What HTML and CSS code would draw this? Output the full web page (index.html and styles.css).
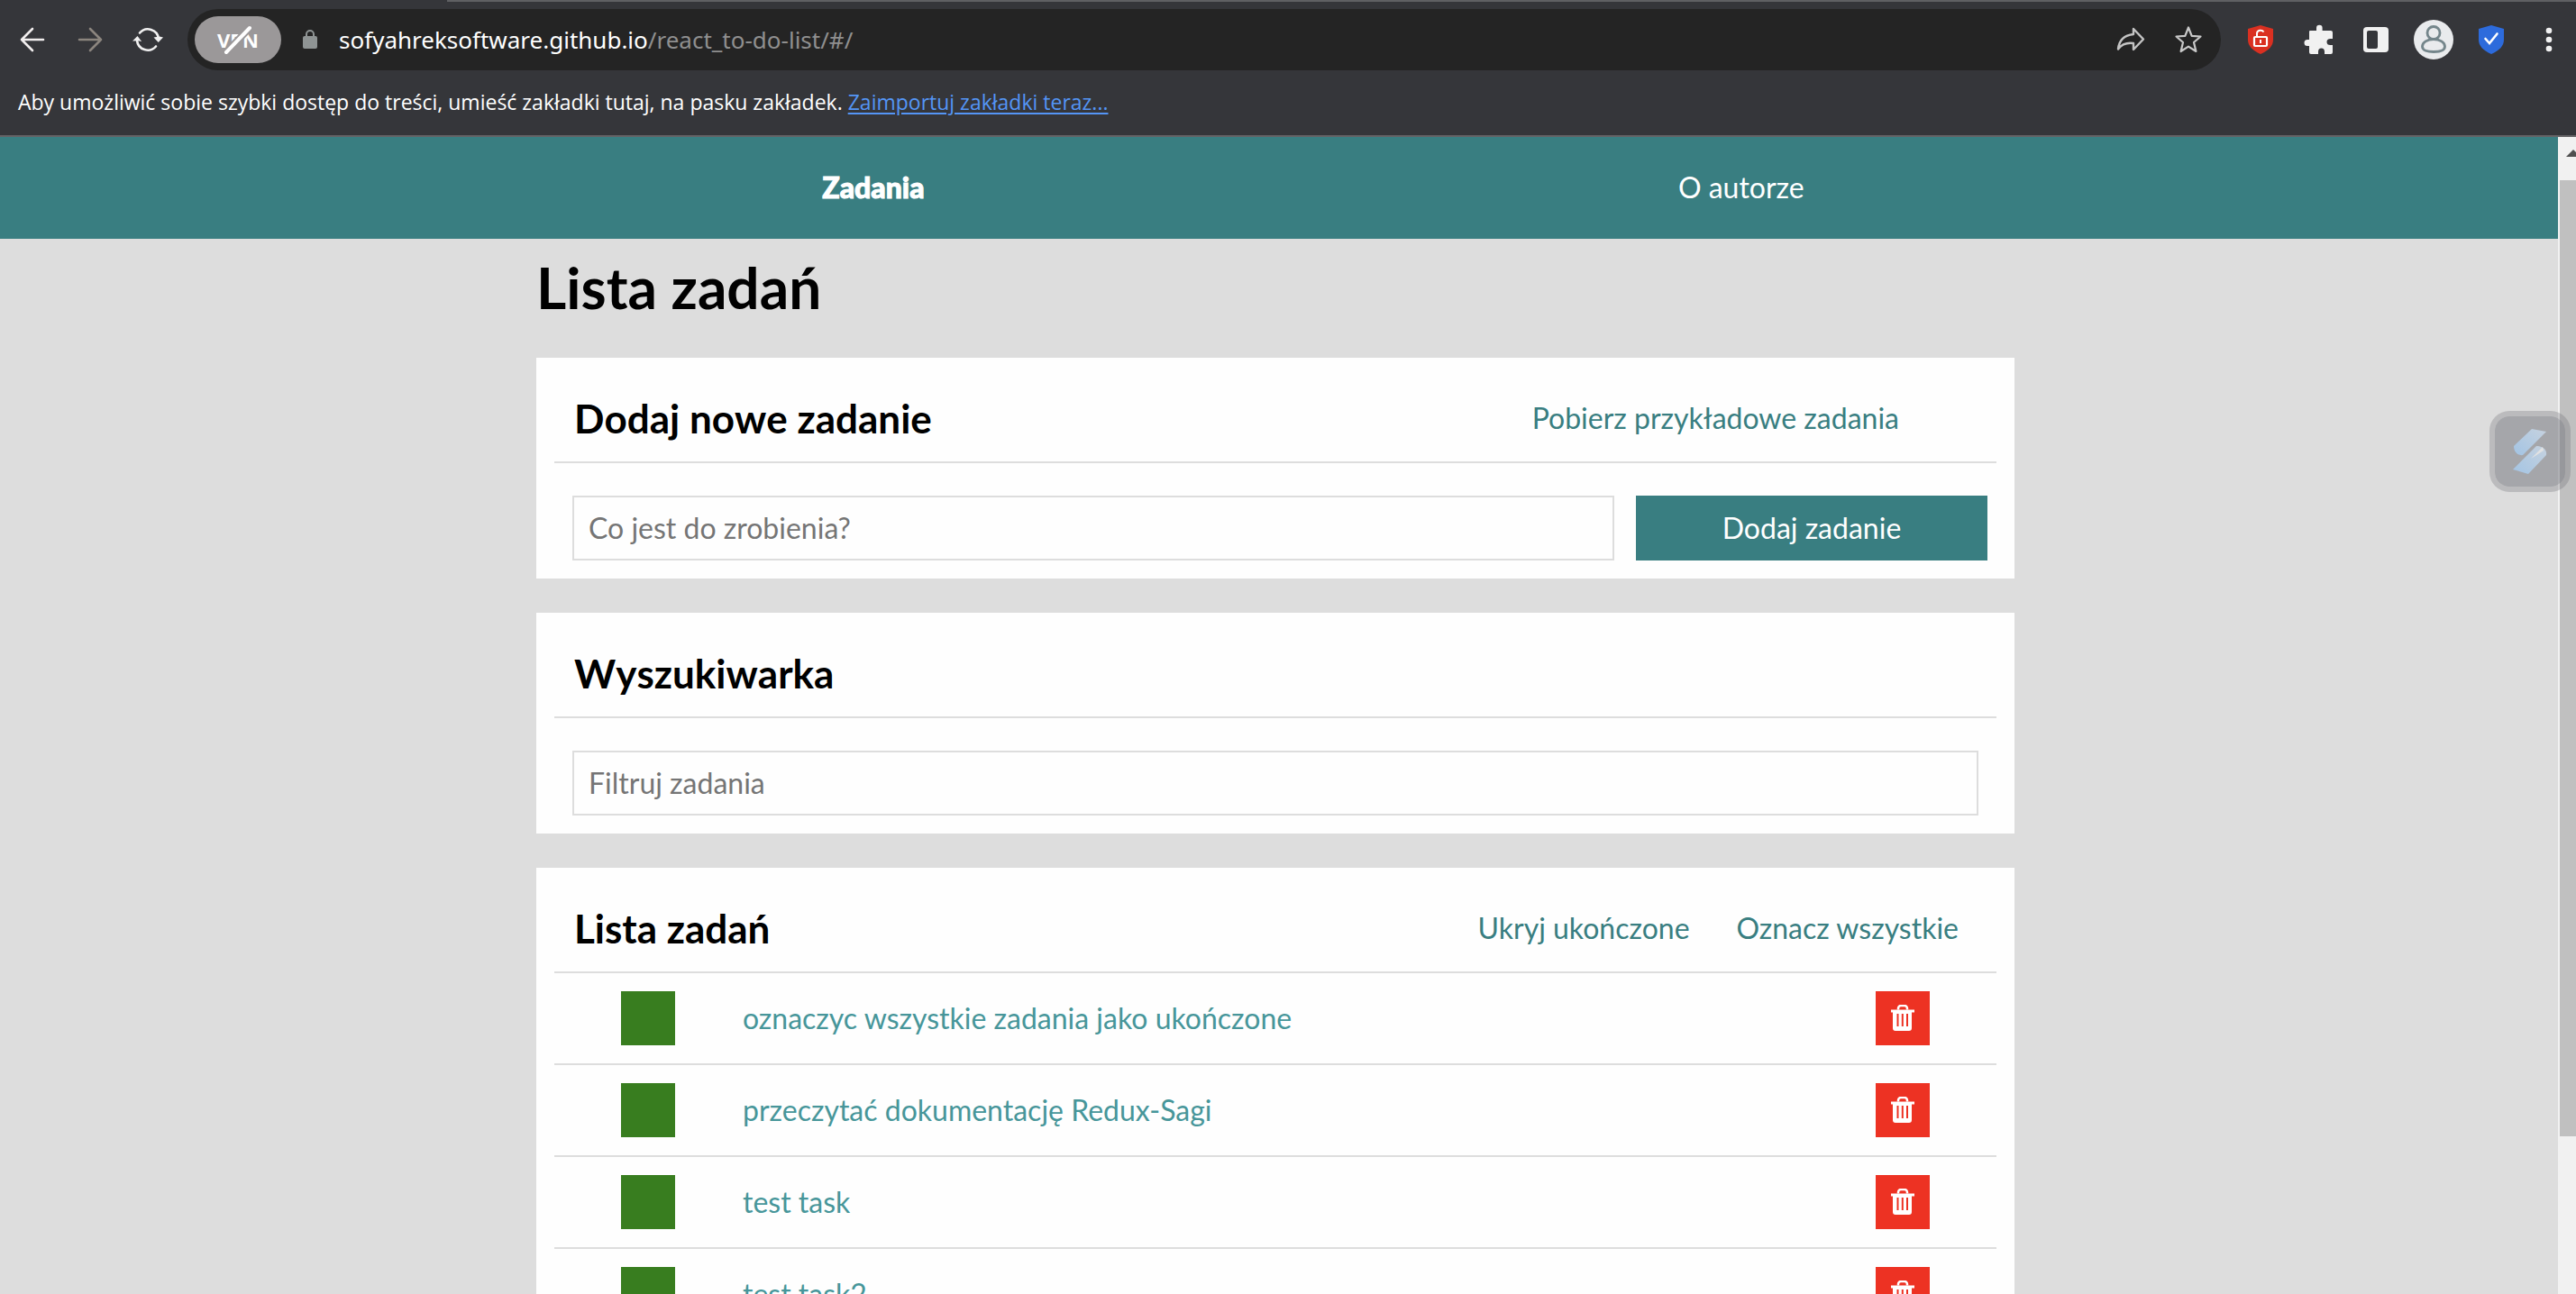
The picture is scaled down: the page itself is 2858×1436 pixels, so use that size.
FILE: index.html
```html
<!DOCTYPE html>
<html lang="pl">
<head>
  <meta charset="utf-8">
  <title>Lista zadań</title>
  <link rel="stylesheet" href="styles.css">
</head>
<body>
  <header class="browser">
    <div class="toolbar">
      <button class="tool" aria-label="Wstecz">
        <svg width="32" height="32" viewBox="0 0 32 32" fill="none" stroke="#f1eeee" stroke-width="2.6" stroke-linecap="round" stroke-linejoin="round"><path d="M28 16H4M16 4L4 16l12 12"/></svg>
      </button>
      <button class="tool" aria-label="Dalej">
        <svg width="32" height="32" viewBox="0 0 32 32" fill="none" stroke="#8b857e" stroke-width="2.6" stroke-linecap="round" stroke-linejoin="round"><path d="M4 16h24M16 4l12 12-12 12"/></svg>
      </button>
      <button class="tool" aria-label="Odśwież">
        <svg width="34" height="34" viewBox="0 0 34 34"><g fill="none" stroke="#f1f1f1" stroke-width="2.6" stroke-linecap="round"><path d="M8 9.5A12 12 0 0 1 29 16"/><path d="M5 18a12 12 0 0 0 21 6.500"/></g><path d="M23.500 14.500l5.200 5.500 5.300-5.500-4-1zM0 18.500l5.500-5.500 4.700 6-4-.7z" fill="#f1f1f1"/></svg>
      </button>
      <div class="omnibox">
        <button class="vpn">VPN
          <svg class="vpn-slash" width="40" height="40" viewBox="0 0 40 40" stroke-linecap="round"><path d="M7 34L33 7" stroke="#9b9899" stroke-width="8"/><path d="M7 34L33 7" stroke="#fff" stroke-width="4"/></svg>
        </button>
        <svg class="lock" width="16" height="22" viewBox="0 0 16 22"><rect y="7" width="16" height="14" rx="2" fill="#8f9494"/><path d="M4 8V5a4 4 0 0 1 8 0v3" fill="none" stroke="#8f9494" stroke-width="2"/></svg>
        <span class="url">sofyahreksoftware.github.io<span class="url-path">/react_to-do-list/#/</span></span>
        <button class="tool" aria-label="Udostępnij">
          <svg width="34" height="30" viewBox="0 0 34 30" fill="none" stroke="#c4c4c4" stroke-width="2.400" stroke-linejoin="round"><path d="M20 3l11 11.500L20 26v-7C12 18 7 20 3 25.500 4 16 10 10 20 9z"/></svg>
        </button>
        <button class="tool" aria-label="Dodaj zakładkę">
          <svg width="32" height="32" viewBox="0 0 32 32" fill="none" stroke="#c9c9c9" stroke-width="2.200" stroke-linejoin="round"><path d="M16 2.500l3.700 9.300 9.800.7-7.500 6.500 2.400 10L16 23.600 7.600 29l2.400-10-7.500-6.500 9.800-.7z"/></svg>
        </button>
      </div>
      <button class="tool" aria-label="Ochrona">
        <svg width="28" height="32" viewBox="0 0 28 32"><path d="M14 0l14 4v12c0 7-5 12-14 16C5 28 0 23 0 16V4z" fill="#da3021"/><rect x="7" y="13" width="14" height="10" rx="1" fill="none" stroke="#fff" stroke-width="2.200"/><path d="M10 13V9a4 3.500 0 0 1 7.500-1.500M14 16v4" fill="none" stroke="#fff" stroke-width="2"/></svg>
      </button>
      <button class="tool" aria-label="Rozszerzenia">
        <svg width="34" height="34" viewBox="0 0 34 34" fill="#f1f1f1"><path d="M8 7h7V4a3.300 3.300 0 0 1 6.600 0v3H31a2 2 0 0 1 2 2v7h-2.500a4 3.500 0 0 0 0 7H33v8a2 2 0 0 1-2 2h-7v-2.500a3.500 4 0 0 0-7 0V33H9a2 2 0 0 1-2-2v-7H5a3.500 3.500 0 0 1 0-7h2V8a1 1 0 0 1 1-1z"/></svg>
      </button>
      <button class="tool" aria-label="Panel boczny">
        <svg width="28" height="28" viewBox="0 0 28 28"><rect width="28" height="28" rx="4" fill="#f1f1f1"/><rect x="4" y="4" width="12" height="20" rx="2" fill="#35363a"/></svg>
      </button>
      <button class="tool" aria-label="Profil">
        <svg width="44" height="44" viewBox="0 0 44 44"><circle cx="22" cy="22" r="22" fill="#e9ebed"/><g fill="none" stroke="#74868b" stroke-width="2.800"><circle cx="22" cy="14.500" r="7"/><path d="M22 21.500c7 0 12.500 3.500 12.500 8s-6 6-12.500 6-12.500-1.500-12.500-6 5.500-8 12.500-8z"/></g></svg>
      </button>
      <button class="tool" aria-label="Zabezpieczenia">
        <svg width="28" height="32" viewBox="0 0 28 32"><path d="M14 0l14 4v12c0 7-5 12-14 16C5 28 0 23 0 16V4z" fill="#2d6bdc"/><path d="M7.500 15l4.500 5 8.500-10.500" fill="none" stroke="#fff" stroke-width="2.600" stroke-linecap="round"/></svg>
      </button>
      <button class="tool" aria-label="Menu">
        <svg width="8" height="28" viewBox="0 0 8 28" fill="#f1f1f1"><circle cx="4" cy="4" r="3.300"/><circle cx="4" cy="14" r="3.300"/><circle cx="4" cy="24" r="3.300"/></svg>
      </button>
    </div>
    <p class="bookmarks">Aby umożliwić sobie szybki dostęp do treści, umieść zakładki tutaj, na pasku zakładek. <a class="import" href="#">Zaimportuj zakładki teraz...</a></p>
  </header>

  <div class="window">
    <div class="page">
      <nav>
        <ul class="nav">
          <li><a class="nav-link nav-link-active" href="#/zadania">Zadania</a></li>
          <li><a class="nav-link" href="#/autor">O autorze</a></li>
        </ul>
      </nav>
      <main class="container">
        <h1 class="title">Lista zadań</h1>

        <section class="card">
          <header class="card-header">
            <h2 class="card-title">Dodaj nowe zadanie</h2>
            <div class="actions actions-single"><button class="text-button">Pobierz przykładowe zadania</button></div>
          </header>
          <form class="form form-add">
            <input class="field" type="text" placeholder="Co jest do zrobienia?" aria-label="Nowe zadanie">
            <button class="submit" type="button">Dodaj zadanie</button>
          </form>
        </section>

        <section class="card">
          <header class="card-header">
            <h2 class="card-title">Wyszukiwarka</h2>
          </header>
          <div class="form form-search">
            <input class="field" type="text" placeholder="Filtruj zadania" aria-label="Filtruj zadania">
          </div>
        </section>

        <section class="card">
          <header class="card-header">
            <h2 class="card-title">Lista zadań</h2>
            <div class="actions">
              <button class="text-button">Ukryj ukończone</button>
              <button class="text-button">Oznacz wszystkie</button>
            </div>
          </header>
          <ul class="tasks">
            <li class="task">
              <button class="toggle" aria-label="Ukończ"></button>
              <a class="task-link" href="#/zadania/1">oznaczyc wszystkie zadania jako ukończone</a>
              <button class="remove" aria-label="Usuń"><svg width="26" height="30" viewBox="0 0 26 30"><use href="#trash"/></svg></button>
            </li>
            <li class="task">
              <button class="toggle" aria-label="Ukończ"></button>
              <a class="task-link" href="#/zadania/2">przeczytać dokumentację Redux-Sagi</a>
              <button class="remove" aria-label="Usuń"><svg width="26" height="30" viewBox="0 0 26 30"><use href="#trash"/></svg></button>
            </li>
            <li class="task">
              <button class="toggle" aria-label="Ukończ"></button>
              <a class="task-link" href="#/zadania/3">test task</a>
              <button class="remove" aria-label="Usuń"><svg width="26" height="30" viewBox="0 0 26 30"><use href="#trash"/></svg></button>
            </li>
            <li class="task">
              <button class="toggle" aria-label="Ukończ"></button>
              <a class="task-link" href="#/zadania/4">test task2</a>
              <button class="remove" aria-label="Usuń"><svg width="26" height="30" viewBox="0 0 26 30"><use href="#trash"/></svg></button>
            </li>
          </ul>
        </section>
      </main>
    </div>
    <div class="scrollbar">
      <svg class="scroll-up" width="16" height="8" viewBox="0 0 16 8"><path d="M0 8l8-8 8 8z" fill="#505050"/></svg>
      <div class="thumb"></div>
      <div class="track-rest"></div>
    </div>
    <button class="widget" aria-label="Asystent">
      <svg width="38" height="52" viewBox="0 0 38 52"><defs><linearGradient id="blade" x1="0" y1="1" x2="1" y2="0"><stop offset="0" stop-color="#a3c4e4"/><stop offset="1" stop-color="#c6d2df"/></linearGradient></defs><path d="M21 1l16 3-26 26C6 31 1 27 1 20z" fill="url(#blade)"/><path d="M26 20c6 0 12 3 11 10L17 51 0 46z" fill="url(#blade)"/><path d="M33 21L20 34l14-9z" fill="#e2e2e2"/></svg>
    </button>
  </div>

  <svg class="sprite" aria-hidden="true">
    <symbol id="trash" viewBox="0 0 26 30">
      <path d="M8 5.500V4a3 3 0 0 1 3-3h4a3 3 0 0 1 3 3v1.500" fill="none" stroke="#fff" stroke-width="2.500"/>
      <path fill="#fff" fill-rule="evenodd" d="M0 5.500h26v3h-3V26a3 3 0 0 1-3 3H5a3 3 0 0 1-3-3V8.500H0zM6.500 10v14h2V10zM11.800 10v14h2V10zM17 10v14h2V10z"/>
    </symbol>
  </svg>
</body>
</html>
```
FILE: styles.css
```css
* {
  box-sizing: border-box;
}

body {
  margin: 0;
  height: 100vh;
  overflow: hidden;
  display: flex;
  flex-direction: column;
  font-family: Lato, sans-serif;
  font-size: 32px;
  color: #000;
  background: #ddd;
}

button {
  font: inherit;
  border: 0;
  padding: 0;
  cursor: pointer;
}

.sprite {
  position: absolute;
  width: 0;
  height: 0;
}

/* Browser chrome */
.browser {
  flex: none;
  background: #35363a;
  border-bottom: 2px solid #646366;
  font-family: "Noto Sans", sans-serif;
  color: #fff;
}

.toolbar {
  display: flex;
  align-items: center;
  gap: 20px;
  height: 88px;
  padding: 0 8px 0 14px;
  background: linear-gradient(#5f6063, #5f6063) 496px 0 / 100% 2px no-repeat;
}

.tool {
  display: flex;
  align-items: center;
  justify-content: center;
  flex: none;
  width: 44px;
  height: 44px;
  background: none;
}

.omnibox {
  flex: 1;
  display: flex;
  align-items: center;
  gap: 20px;
  height: 68px;
  margin: 0 2px;
  padding: 0 14px 0 8px;
  border-radius: 34px;
  background: #242424;
}

.vpn {
  position: relative;
  width: 96px;
  height: 52px;
  border-radius: 26px;
  background: #9b9899;
  color: #fff;
  font-size: 22px;
  font-weight: 700;
}

.vpn-slash {
  position: absolute;
  left: 28px;
  top: 6px;
}

.lock {
  margin: 0 4px;
}

.url {
  flex: 1;
  font-size: 26px;
}

.url-path {
  color: #8f8f8f;
}

.bookmarks {
  margin: 0;
  height: 62px;
  padding: 8px 20px;
  font-family: "Open Sans", sans-serif;
  font-size: 23px;
  line-height: 34px;
}

.import {
  color: #5495f5;
  text-underline-offset: 3px;
}

/* Page viewport */
.window {
  position: relative;
  flex: 1;
  min-height: 0;
  display: flex;
}

.page {
  flex: 1;
  overflow: hidden;
}

.nav {
  display: flex;
  justify-content: space-evenly;
  margin: 0;
  padding: 36px 0 37px 76px;
  list-style: none;
  line-height: 40px;
  background: #397e81;
}

.nav-link {
  color: #fff;
  text-decoration: none;
}

.nav-link-active {
  font-weight: 900;
  -webkit-text-stroke: 1px #fff;
}

.container {
  max-width: 1648px;
  margin: 0 auto;
  padding-right: 8px;
}

.title {
  margin: 0;
  padding: 14px 0 38px;
  font-size: 64px;
  line-height: 80px;
}

.card {
  margin-bottom: 38px;
  padding: 0 20px 20px;
  background: #fefefe;
}

.card-header {
  display: flex;
  align-items: center;
  justify-content: space-between;
  height: 117px;
  padding: 18px 20px 0 22px;
  border-bottom: 2px solid #ddd;
}

.card-title {
  margin: 0;
  font-size: 44px;
  font-kerning: none;
}

.actions {
  display: flex;
  gap: 52px;
  padding-right: 22px;
}

.actions-single {
  padding-right: 88px;
}

.text-button {
  background: none;
  color: #397e81;
}

.form {
  display: grid;
  gap: 24px;
  padding: 36px 20px 0;
}

.form-add {
  grid-template-columns: 1fr 390px;
  padding-right: 10px;
}

.field {
  min-width: 0;
  height: 72px;
  padding: 0 16px 2px;
  border: 2px solid #ddd;
  background: #fefefe;
  font: inherit;
}

.field::placeholder {
  color: #757575;
}

.submit {
  height: 72px;
  padding-bottom: 2px;
  background: #397e81;
  color: #fff;
}

.tasks {
  margin: 0;
  padding: 0;
  list-style: none;
}

.task {
  display: grid;
  grid-template-columns: 60px 1fr 60px;
  align-items: center;
  column-gap: 75px;
  padding: 20px 74px;
  border-bottom: 2px solid #ddd;
}

.task-link {
  padding-bottom: 2px;
  color: #47969a;
  text-decoration: none;
}

.toggle,
.remove {
  display: flex;
  align-items: center;
  justify-content: center;
  width: 60px;
  height: 60px;
}

.toggle {
  background: #387d1f;
}

.remove {
  background: #ed3223;
}

/* Scrollbar */
.scrollbar {
  flex: none;
  display: flex;
  flex-direction: column;
  width: 20px;
  padding-left: 2px;
  overflow: hidden;
  background: #f1f1f1;
}

.scroll-up {
  flex: none;
  margin: 14px 0 26px 7px;
}

.thumb {
  flex: 1061;
  background: #c0c0c0;
}

.track-rest {
  flex: 175;
}

/* Floating helper */
.widget {
  position: absolute;
  top: 304px;
  right: 6px;
  display: flex;
  align-items: center;
  justify-content: center;
  width: 90px;
  height: 90px;
  border: 6px solid rgba(110, 110, 115, 0.3);
  border-radius: 22px;
  background: rgba(110, 112, 120, 0.5);
  background-clip: padding-box;
}
```
